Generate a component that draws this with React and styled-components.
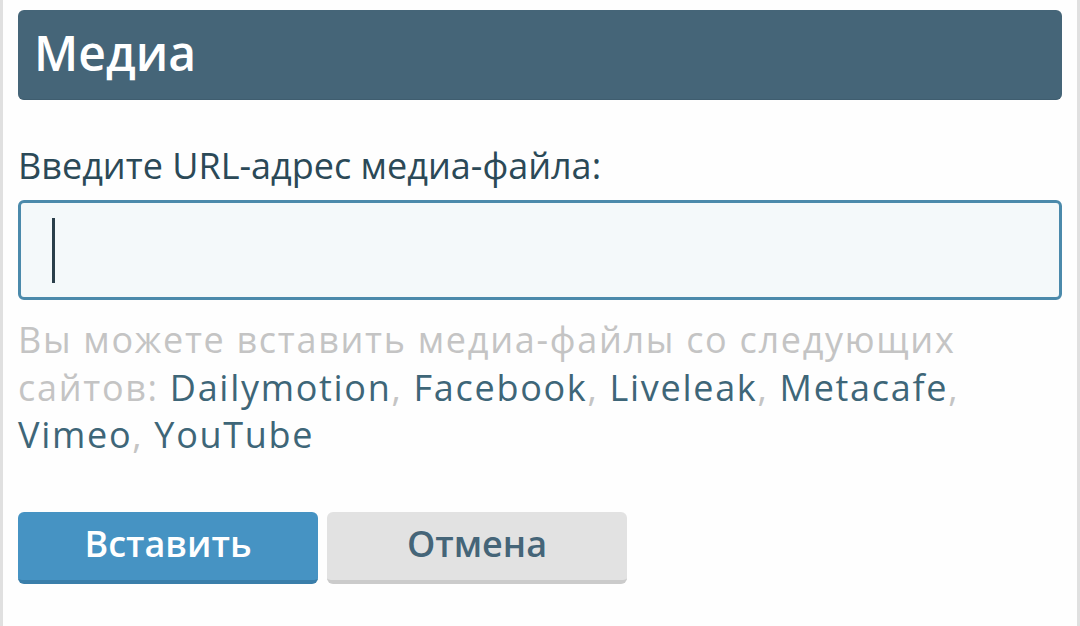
import styled, { createGlobalStyle } from 'styled-components'

const GlobalStyle = createGlobalStyle`
    html, body {
        margin: 0;
        padding: 0;
        background: #e0e0e0;
    }
    body {
        font-family: "Open Sans", "Noto Sans", sans-serif;
    }
`

const Panel = styled.div`
    box-sizing: border-box;
    margin: 0 3px;
    min-height: 626px;
    background: #fefefe;
    padding: 10px 15px 0;
`

const Header = styled.div`
    block-size: 90px;
    background: #456578;
    border-bottom: 1px solid #3f5d6f;
    border-radius: 6px;
    box-sizing: border-box;
    display: flex;
    align-items: center;
    padding-inline-start: 16px;
    h1 {
        margin: 0;
        font-size: 48px;
        font-weight: 600;
        color: #ffffff;
        line-height: 1;
        padding-block-end: 4px;
    }
`

const Label = styled.label`
    display: block;
    margin-block-start: 40px;
    font-size: 36px;
    color: #2b4957;
    line-height: 52px;
`

const UrlInput = styled.div`
    margin-block-start: 8px;
    box-sizing: border-box;
    block-size: 100px;
    border: 3px solid #4b8aab;
    border-radius: 6px;
    background: #f4f9fa;
    display: flex;
    align-items: center;
    padding-inline-start: 31px;
    .caret {
        inline-size: 3px;
        block-size: 65px;
        background: #2a3f4a;
    }
`

const Hint = styled.p`
    margin: 16px 0 0;
    font-size: 36px;
    letter-spacing: 1.7px;
    line-height: 47.5px;
    color: #c4c4c4;
    a {
        color: #3e6678;
        text-decoration: none;
    }
`

const Actions = styled.div`
    display: flex;
    gap: 9px;
    margin-block-start: 53px;
`

const Button = styled.button`
    inline-size: 300px;
    block-size: 72px;
    box-sizing: border-box;
    border: none;
    border-radius: 6px;
    font-family: inherit;
    font-size: 36px;
    font-weight: 600;
    padding: 0 0 4px;
    background: ${p => (p.$primary ? '#4693c3' : '#e2e2e2')};
    color: ${p => (p.$primary ? '#ffffff' : '#456578')};
    border-bottom: 4px solid ${p => (p.$primary ? '#3a7eaa' : '#cbcbcb')};
`

const sites = ['Dailymotion', 'Facebook', 'Liveleak', 'Metacafe', 'Vimeo', 'YouTube']

export default function App() {
    return (
        <>
            <GlobalStyle />
            <Panel>
                <Header>
                    <h1>Медиа</h1>
                </Header>
                <Label>Введите URL-адрес медиа-файла:</Label>
                <UrlInput>
                    <div className='caret' />
                </UrlInput>
                <Hint>
                    Вы можете вставить медиа-файлы со следующих сайтов:{' '}
                    {sites.map((s, i) => (
                        <span key={s}>
                            <a href='#'>{s}</a>
                            {i < sites.length - 1 ? ', ' : ''}
                        </span>
                    ))}
                </Hint>
                <Actions>
                    <Button $primary>Вставить</Button>
                    <Button>Отмена</Button>
                </Actions>
            </Panel>
        </>
    )
}
